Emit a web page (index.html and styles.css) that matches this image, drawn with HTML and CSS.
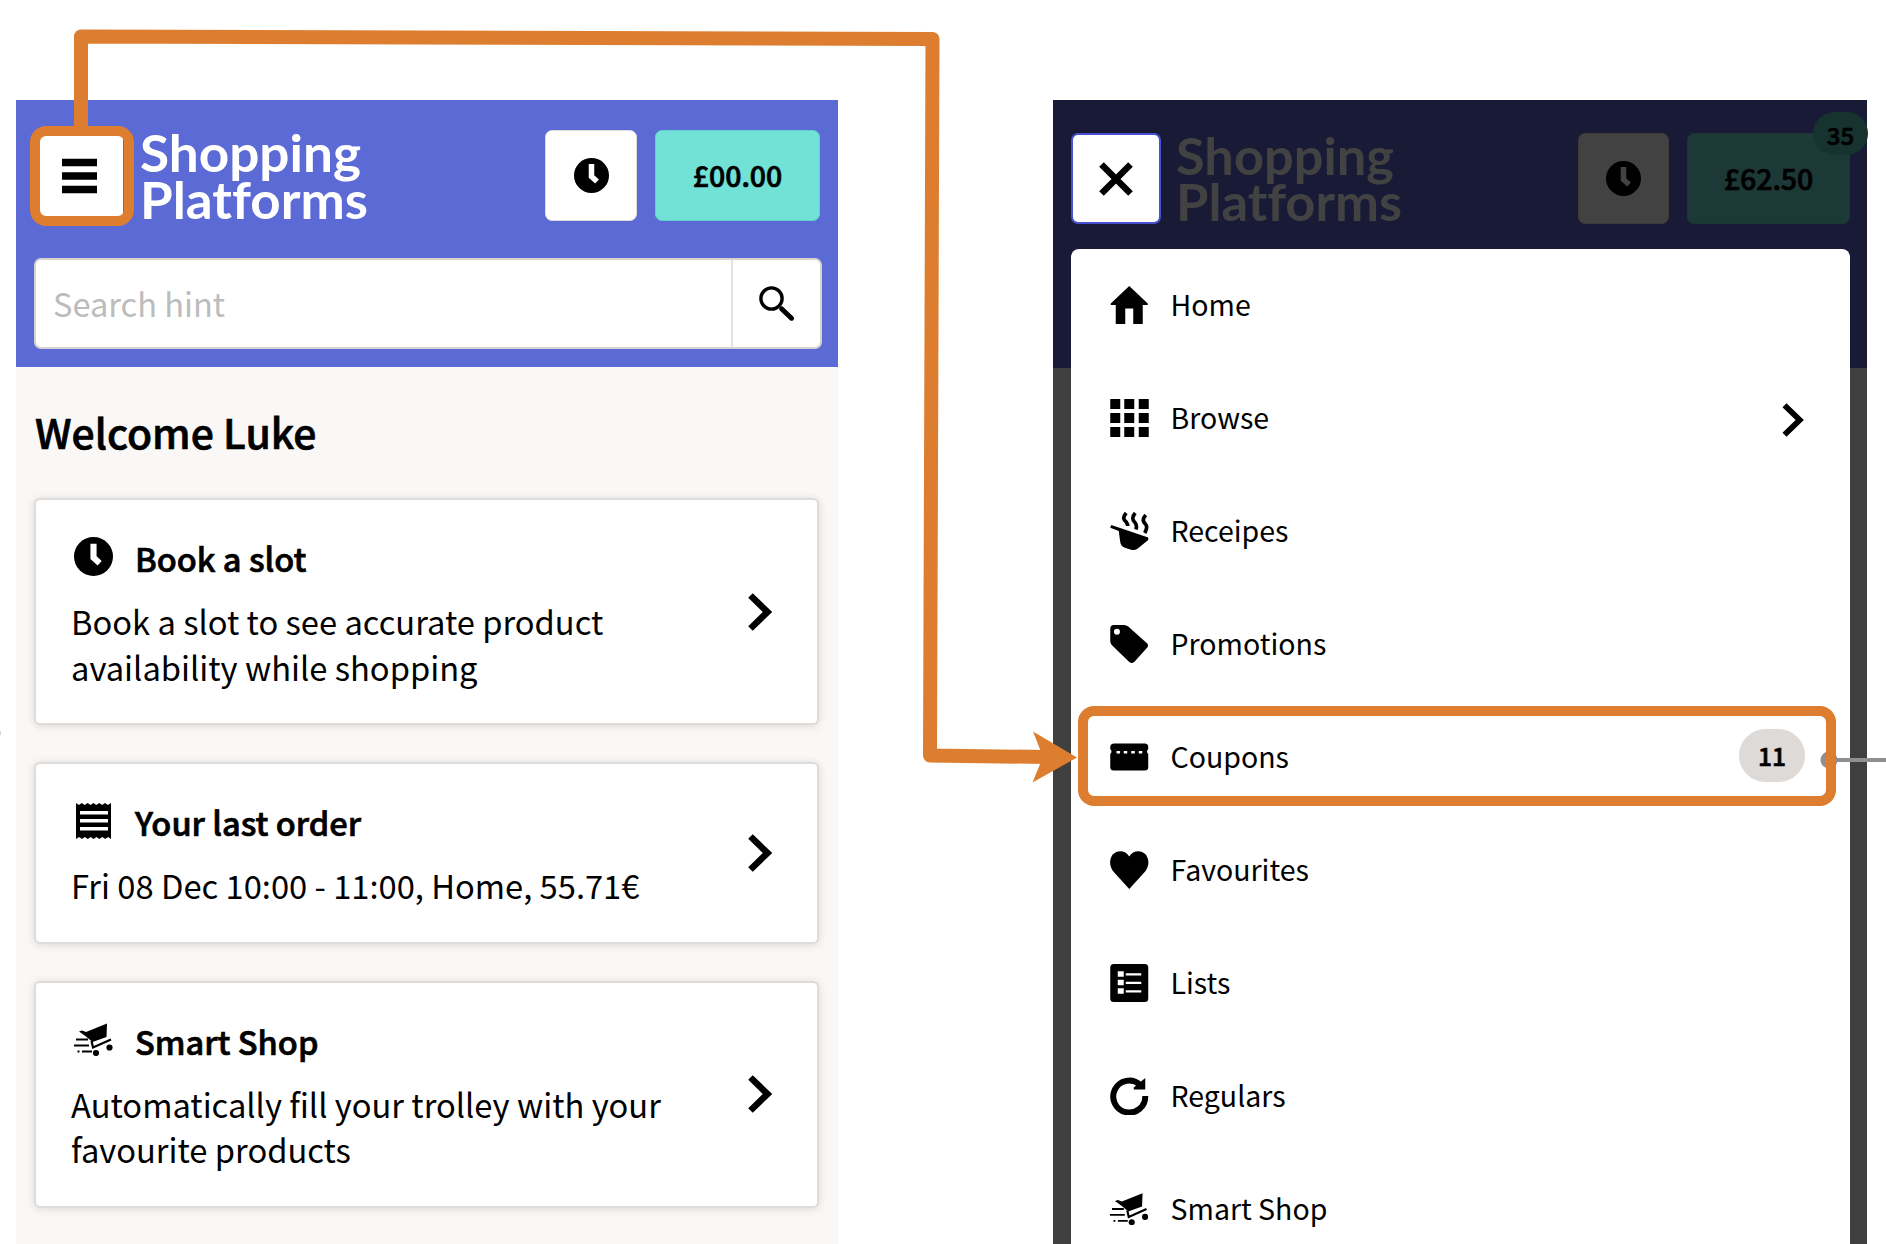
FILE: index.html
```html
<!DOCTYPE html>
<html lang="en">
<head>
<meta charset="utf-8">
<title>Shopping Platforms</title>
<link rel="stylesheet" href="styles.css">
</head>
<body>
<svg class="defs" aria-hidden="true">
  <symbol id="clock" viewBox="0 0 38 38"><circle cx="19" cy="19" r="19"/><path d="M19 6.500V20l6 5.500" fill="none" stroke="var(--hand,#fff)" stroke-width="6"/></symbol>
  <symbol id="chevron" viewBox="0 0 24 38"><path d="M2.500 2.500L19.500 19 2.500 35.500" fill="none" stroke="#000" stroke-width="6.500"/></symbol>
  <symbol id="cart" viewBox="0 0 39 33"><path d="M5 8.500L8 7.500 12 9 33 .5 32.500 14 18.500 19 12 13.500Z"/><path d="M17.500 18l1.500 6.500L37 16.500" fill="none" stroke="#000" stroke-width="2.200"/><circle cx="35.500" cy="24.500" r="3.100"/><circle cx="22" cy="30" r="3.100"/><path d="M2 16.500h12M0 22.500h15M8 28.500h10M3.500 28.500h2" stroke="#000" stroke-width="1.900"/></symbol>
</svg>

<main class="board">
  <section class="phone">
    <header class="top">
      <div class="bar">
        <button class="square menu-button" aria-label="Menu"><svg width="35" height="36" viewBox="0 0 35 36"><path d="M0 4.500h35M0 18h35M0 31.500h35" stroke="#000" stroke-width="7.500"/></svg></button>
        <svg class="logo" width="232" height="100" viewBox="0 0 232 100"><text x="0" y="46" textLength="221" lengthAdjust="spacingAndGlyphs">Shopping</text><text x="0" y="93" textLength="228" lengthAdjust="spacingAndGlyphs">Platforms</text></svg>
        <button class="square" aria-label="Slots"><svg class="clock-small"><use href="#clock"/></svg></button>
        <button class="total">£00.00</button>
      </div>
      <div class="search">
        <span class="hint">Search hint</span>
        <span class="go"><svg width="36" height="36" viewBox="0 0 36 36"><circle cx="12.500" cy="12.500" r="10.600" fill="none" stroke="#000" stroke-width="3.400"/><path d="M22.800 23l9.700 9.200" stroke="#000" stroke-width="5" stroke-linecap="round"/></svg></span>
      </div>
    </header>
    <div class="feed">
      <h1>Welcome Luke</h1>
      <article class="card">
        <div>
          <h2><svg class="icon" width="39" height="39"><use href="#clock"/></svg>Book a slot</h2>
          <p>Book a slot to see accurate product<br>availability while shopping</p>
        </div>
        <svg class="chevron"><use href="#chevron"/></svg>
      </article>
      <article class="card">
        <div>
          <h2><svg class="icon receipt" width="39" height="38" viewBox="0 0 39 38"><path d="M2 1l2.900 2 2.900-2 2.900 2 2.900-2 2.900 2 2.900-2 2.900 2 2.900-2 2.900 2 2.900-2 2.900 2L37 1v36l-2.900-2-2.900 2-2.900-2-2.900 2-2.900-2-2.900 2-2.900-2-2.900 2-2.900-2-2.900 2-2.900-2L2 37Z"/><path d="M6 10.800h28M6 18.800h28M6 26.800h28" stroke="#fff" stroke-width="3.600"/></svg>Your last order</h2>
          <p>Fri 08 Dec 10:00 - 11:00, Home, 55.71€</p>
        </div>
        <svg class="chevron"><use href="#chevron"/></svg>
      </article>
      <article class="card">
        <div>
          <h2><svg class="icon" width="39" height="33"><use href="#cart"/></svg>Smart Shop</h2>
          <p>Automatically fill your trolley with your<br>favourite products</p>
        </div>
        <svg class="chevron"><use href="#chevron"/></svg>
      </article>
    </div>
  </section>

  <section class="phone dimmed">
    <header class="top">
      <div class="bar">
        <button class="square close" aria-label="Close"><svg width="34" height="34" viewBox="0 0 34 34"><path d="M2.500 2.500l29 29M31.500 2.500l-29 29" stroke="#000" stroke-width="6.500"/></svg></button>
        <svg class="logo" width="232" height="100" viewBox="0 0 232 100"><text x="0" y="46" textLength="218" lengthAdjust="spacingAndGlyphs">Shopping</text><text x="0" y="92" textLength="226" lengthAdjust="spacingAndGlyphs">Platforms</text></svg>
        <button class="square" aria-label="Slots"><svg class="clock-small"><use href="#clock"/></svg></button>
        <button class="total">£62.50<span class="count">35</span></button>
      </div>
    </header>
    <nav class="menu">
      <a><svg class="icon" viewBox="0 0 38 38"><path d="M19 0l18.500 17.500V19H32.500V38h-9.500V22.500h-8V38H5.500V19H.5v-1.500Z"/></svg><span>Home</span></a>
      <a><svg class="icon" viewBox="0 0 38 38"><path d="M0 0h10v10H0zM14 0h10v10H14zM28.500 0h10v10h-10zM0 14h10v10H0zM14 14h10v10H14zM28.500 14h10v10h-10zM0 28h10v10H0zM14 28h10v10H14zM28.500 28h10v10h-10z"/></svg><span>Browse</span><svg class="chevron"><use href="#chevron"/></svg></a>
      <a><svg class="icon" viewBox="0 0 38 38"><path d="M1 13l37 12.500v2.500L27.500 36.500Q24 39 20 37.500L14 35.500Q10.500 34 10 30L8.500 19 0 15.800Z"/><path d="M16 1c-4.500 5-2 7 0 9 1 1.500 1.500 2.500 1.500 4M25 1c-4.500 5-2 8 0 10 1.500 2 1.500 4 .7 6.500M35.500 3c-4.500 5-2 7 0 9.500 1.500 2 1 5-1 8.500" fill="none" stroke="#000" stroke-width="3.700"/></svg><span>Receipes</span></a>
      <a><svg class="icon" viewBox="0 0 38 38"><path fill-rule="evenodd" d="M3.500 0H14q2 0 4 1.500L37 18.500q1.500 2 0 4L24 37q-2.500 2-5 0L1.500 20Q0 18.500 0 16V4Q0 0 3.500 0ZM6.700 3.700a3 3 0 100 6 3 3 0 000-6Z"/></svg><span>Promotions</span></a>
      <a><svg class="icon" viewBox="0 0 38 38"><path d="M4 5.500H34.500q3.500 0 3.500 3.500v2q-2.500 2.500 0 5V29q0 3.500-3.500 3.500H3.500Q0 32.500 0 29V16q2.500-2.500 0-5V9Q0 5.500 4 5.500Z"/><path d="M6.300 14.300h3.500M13.500 14.300h3.500M21 14.300h3.500M28.500 14.300h3.500" stroke="#fff" stroke-width="2.600"/></svg><span>Coupons</span><b class="pill">11</b></a>
      <a><svg class="icon" viewBox="0 0 38 38"><path d="M19 38L4 21.500C-1.500 15.500-1 8 2.500 3.500 7-1.500 15.500-1 19 5.500 22.500-1 31-1.500 35.500 3.500 39 8 39.500 15.500 34 21.500Z"/></svg><span>Favourites</span></a>
      <a><svg class="icon" viewBox="0 0 38 38"><rect width="38" height="38" rx="3.500"/><path d="M7.500 10h6M7.500 18.500h6M7.500 27h6" stroke="#fff" stroke-width="5.600"/><path d="M15.500 10.300H31M15.500 18.800H31M15.500 27.300H31" stroke="#fff" stroke-width="2.300"/></svg><span>Lists</span></a>
      <a><svg class="icon" viewBox="0 0 38 38"><path d="M29.500 7.500A16 16 0 1 0 35 19" fill="none" stroke="#000" stroke-width="6"/><path d="M35 1V12.500H23.500V10.500Z"/></svg><span>Regulars</span></a>
      <a><svg class="icon" viewBox="0 0 39 33"><use href="#cart"/></svg><span>Smart Shop</span></a>
    </nav>
  </section>

  <svg class="notes" width="1886" height="1244" viewBox="0 0 1886 1244">
    <circle cx="-3.500" cy="733" r="4.500" fill="#ccc"/>
    <circle cx="1829" cy="760" r="8.500" fill="#8f8f8f"/>
    <path d="M1829 760h57" stroke="#8f8f8f" stroke-width="4"/>
    <g fill="none" stroke="#dd7d2f">
      <rect x="35" y="131" width="94" height="90" rx="11" stroke-width="10"/>
      <rect x="1083" y="711" width="748" height="90" rx="11" stroke-width="10"/>
      <path d="M81 130V36.500L932.500 39 930 755.500l115 1.500" stroke-width="14" stroke-linejoin="round"/>
    </g>
    <path d="M1033 731.500L1077 757.500 1032.500 782.500 1043 757Z" fill="#dd7d2f"/>
  </svg>
</main>
</body>
</html>
```
FILE: styles.css
```css
* { box-sizing: border-box; }
body {
  margin: 0;
  background: #fff;
  color: #000;
  font-family: "Noto Sans CJK JP", "Noto Sans CJK SC", sans-serif;
}
.defs { position: absolute; width: 0; height: 0; }
.board {
  position: relative;
  display: flex;
  gap: 215px;
  width: 1886px;
  height: 1244px;
  padding: 100px 0 0 16px;
  overflow: hidden;
}
.phone { flex: none; width: 822px; height: 1144px; background: #f9f8f6; }
.top { height: 267px; padding: 30px 16px 0 18px; background: #5c6ad6; }
.bar { display: flex; height: 91px; align-items: center; }
button {
  display: flex;
  align-items: center;
  justify-content: center;
  flex: none;
  height: 91px;
  padding: 0;
  border: 1.500px solid #dedbd8;
  border-radius: 7px;
  background: #fff;
  color: #000;
  font: 500 28.500px/40px "Noto Sans CJK JP", sans-serif;
}
/* semi-bold: the medium face, thickened slightly */
h1, h2, .total, .pill { font-weight: 500; -webkit-text-stroke: .7px #000; }
.square { width: 92px; }
.menu-button { width: 89px; border-color: #fff; padding-left: 2px; }
.clock-small { width: 35px; height: 35px; }
.logo { flex: none; margin: 0 auto 0 17px; overflow: visible; }
.logo text { font: 700 52px Lato, sans-serif; font-variant-ligatures: none; fill: #fff; }
.total { width: 165px; margin-left: 18px; margin-right: 2px; padding-bottom: 2px; background: #72e1d6; border-color: #5fd0cb; position: relative; }
.search {
  display: flex;
  height: 91px;
  margin-top: 37px;
  border: 2px solid #d5d2cf;
  border-radius: 7px;
  background: #fff;
}
.hint { flex: 1; padding-left: 17px; font-size: 32.600px; line-height: 85px; color: #bcbcbc; }
.go { width: 89px; padding: 26px 0 0 25.500px; border-left: 2.500px solid #e4e2df; }
.feed { padding: 35px 21px 0 20px; }
h1 { margin: 0 0 38px -1px; font-size: 40.900px; line-height: 60px; }
.card {
  display: flex;
  align-items: center;
  justify-content: space-between;
  margin-bottom: 41px;
  padding: 34px 45px 34px 35px;
  border-radius: 4px;
  background: #fff;
  box-shadow: 0 0 0 2px #dedbd8, 0 1px 9px 2px rgba(0, 0, 0, .13);
}
.card h2 { display: flex; align-items: center; gap: 22px; margin: 0; font-size: 32.600px; line-height: 47px; }
.card p { margin: 17px 0 0; font-size: 32.700px; line-height: 45.500px; }
.icon { flex: none; }
.card .icon { margin: -2px 0 0 3px; }
.chevron { flex: none; width: 24px; height: 38px; }

.dimmed { width: 814px; background: #3f3f3f; --hand: #424242; }
.dimmed .top { height: 149px; padding: 33px 17px 0 18px; background: #191b36; }
.dimmed .square, .dimmed .total { background: #424242; border-color: #3b3b3b; }
.dimmed .square { width: 91px; }
.dimmed .close { width: 90px; background: #fff; border: 2px solid #4650d0; }
.dimmed .logo { margin-left: 15px; }
.dimmed .logo text { fill: #424242; }
.dimmed .total { width: 163px; margin-right: 0; background: #1d3937; border-color: #1a3533; }
.count {
  position: absolute;
  top: -22px;
  right: -19px;
  width: 55px;
  height: 43px;
  border-radius: 22px;
  background: #16332f;
  font-size: 24px;
  line-height: 46px;
}
.dimmed { background: linear-gradient(#191b36 268px, #3f3f3f 268px); }
.menu { height: 995px; margin: 0 17px 0 18px; border-radius: 8px 8px 0 0; background: #fff; }
.menu a { display: flex; align-items: center; height: 112.900px; padding: 0 45px 0 39px; font-size: 28.500px; line-height: 44px; }
.menu .icon { width: 38.500px; height: 38px; margin-right: 22px; }
.menu a span { flex: 1; padding-bottom: 2px; }
.menu .chevron { width: 22px; height: 34px; margin: 3px 1px 0 0; }
.pill { width: 66px; height: 53px; margin-bottom: 3px; border-radius: 27px; background: #dedad7; font-size: 24.500px; line-height: 53px; text-align: center; }
.notes { position: absolute; inset: 0; }
```
